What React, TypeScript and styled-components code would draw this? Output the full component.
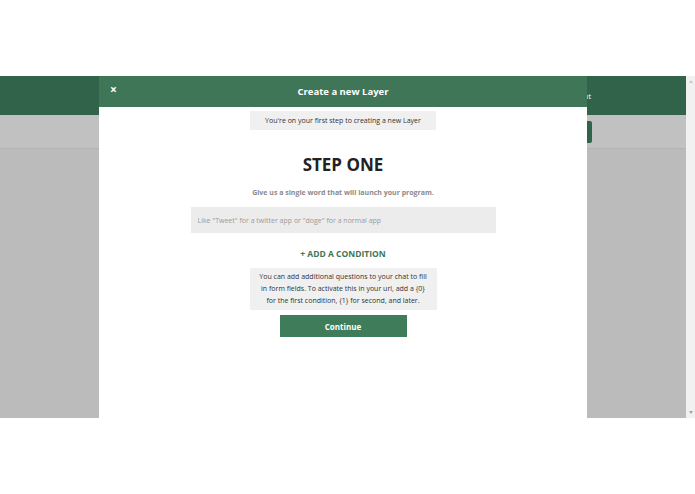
import React from 'react';
import styled, { createGlobalStyle } from 'styled-components';

const GlobalStyle = createGlobalStyle`
  html, body {
    margin: 0;
    padding: 0;
    background: #ffffff;
  }
  * {
    box-sizing: border-box;
  }
`;

const Page = styled.div`
  width: 695px;
  height: 494px;
  padding-top: 76px;
  font-family: "Open Sans", "Liberation Sans", sans-serif;
  background: #ffffff;
`;

const Frame = styled.div`
  display: flex;
  height: 342px;
`;

const Viewport = styled.div`
  position: relative;
  flex: 1;
  display: flex;
  flex-direction: column;
  background: #bbbbbb;
  overflow: hidden;
`;

const AppHeader = styled.div`
  height: 39px;
  display: flex;
  align-items: center;
  justify-content: flex-end;
  padding-right: 95px;
  background: #31634a;
  color: #ffffff;
  font-size: 8px;
`;

const Toolbar = styled.div`
  height: 34px;
  display: flex;
  align-items: center;
  justify-content: flex-end;
  padding-right: 94px;
  background: #c1c1c1;
  border-bottom: 1px solid #b3b3b3;
`;

const ToolbarButton = styled.div`
  width: 70px;
  height: 22px;
  border-radius: 2px;
  background: #31634a;
`;

const Scrollbar = styled.div`
  width: 9px;
  display: flex;
  flex-direction: column;
  justify-content: space-between;
  align-items: center;
  padding: 4px 0;
  background: #f1f1f1;
`;

const Arrow = styled.div<{ $down?: boolean }>`
  width: 0;
  height: 0;
  border-left: 2.5px solid transparent;
  border-right: 2.5px solid transparent;
  ${(p) =>
    p.$down
      ? 'border-top: 3px solid #a3a3a3;'
      : 'border-bottom: 3px solid #c8c8c8;'}
`;

const Modal = styled.div`
  position: absolute;
  top: 0;
  bottom: 0;
  left: 99px;
  width: 488px;
  display: flex;
  flex-direction: column;
  background: #ffffff;
`;

const ModalHeader = styled.div`
  position: relative;
  height: 31px;
  display: flex;
  align-items: center;
  justify-content: center;
  background: #3e7657;
  color: #ffffff;
  font-size: 9.5px;
  font-weight: 700;
`;

const Close = styled.span`
  position: absolute;
  left: 11px;
  top: 7px;
  font-size: 12px;
  font-weight: 700;
  line-height: 14px;
`;

const Body = styled.div`
  display: flex;
  flex-direction: column;
  align-items: center;
  padding-top: 4px;
`;

const InfoBox = styled.div<{ $width: number; $lines?: boolean }>`
  width: ${(p) => p.$width}px;
  padding: ${(p) => (p.$lines ? '3px 6px' : '4px 6px')};
  background: #f0f0f0;
  color: #333333;
  font-size: 7px;
  line-height: ${(p) => (p.$lines ? '12px' : '11px')};
  text-align: center;
`;

const StepTitle = styled.h1`
  margin: 24px 0 0;
  color: #222222;
  font-size: 17px;
  font-weight: 700;
  line-height: 22px;
`;

const Subtitle = styled.p`
  margin: 12px 0 0;
  color: #8a8a8a;
  font-size: 7px;
  font-weight: 700;
  line-height: 10px;
`;

const Input = styled.input`
  width: 305px;
  height: 26px;
  margin-top: 9px;
  padding: 0 7px;
  border: none;
  outline: none;
  background: #ececec;
  font-family: inherit;
  font-size: 7px;
  color: #333333;

  &::placeholder {
    color: #9a9a9a;
  }
`;

const AddCondition = styled.button`
  margin-top: 14px;
  padding: 0;
  border: none;
  background: none;
  color: #3e7657;
  font-family: inherit;
  font-size: 8.5px;
  font-weight: 700;
  line-height: 14px;
  cursor: pointer;
`;

const NoteWrap = styled.div`
  margin-top: 7px;
`;

const ContinueButton = styled.button`
  width: 127px;
  height: 22px;
  margin-top: 5px;
  border: none;
  background: #3e7c5a;
  color: #ffffff;
  font-family: inherit;
  font-size: 8px;
  font-weight: 700;
  cursor: pointer;
`;

export default function App() {
  return (
    <Page>
      <GlobalStyle />
      <Frame>
        <Viewport>
          <AppHeader>Logout</AppHeader>
          <Toolbar>
            <ToolbarButton />
          </Toolbar>
          <Modal>
            <ModalHeader>
              <Close>×</Close>
              Create a new Layer
            </ModalHeader>
            <Body>
              <InfoBox $width={186}>You're on your first step to creating a new Layer</InfoBox>
              <StepTitle>STEP ONE</StepTitle>
              <Subtitle>Give us a single word that will launch your program.</Subtitle>
              <Input placeholder={'Like "Tweet" for a twitter app or "doge" for a normal app'} />
              <AddCondition>+ ADD A CONDITION</AddCondition>
              <NoteWrap>
                <InfoBox $width={187} $lines>
                  You can add additional questions to your chat to fill in form fields. To activate
                  this in your url, add a {'{0}'} for the first condition, {'{1}'} for second, and
                  later.
                </InfoBox>
              </NoteWrap>
              <ContinueButton>Continue</ContinueButton>
            </Body>
          </Modal>
        </Viewport>
        <Scrollbar>
          <Arrow />
          <Arrow $down />
        </Scrollbar>
      </Frame>
    </Page>
  );
}
